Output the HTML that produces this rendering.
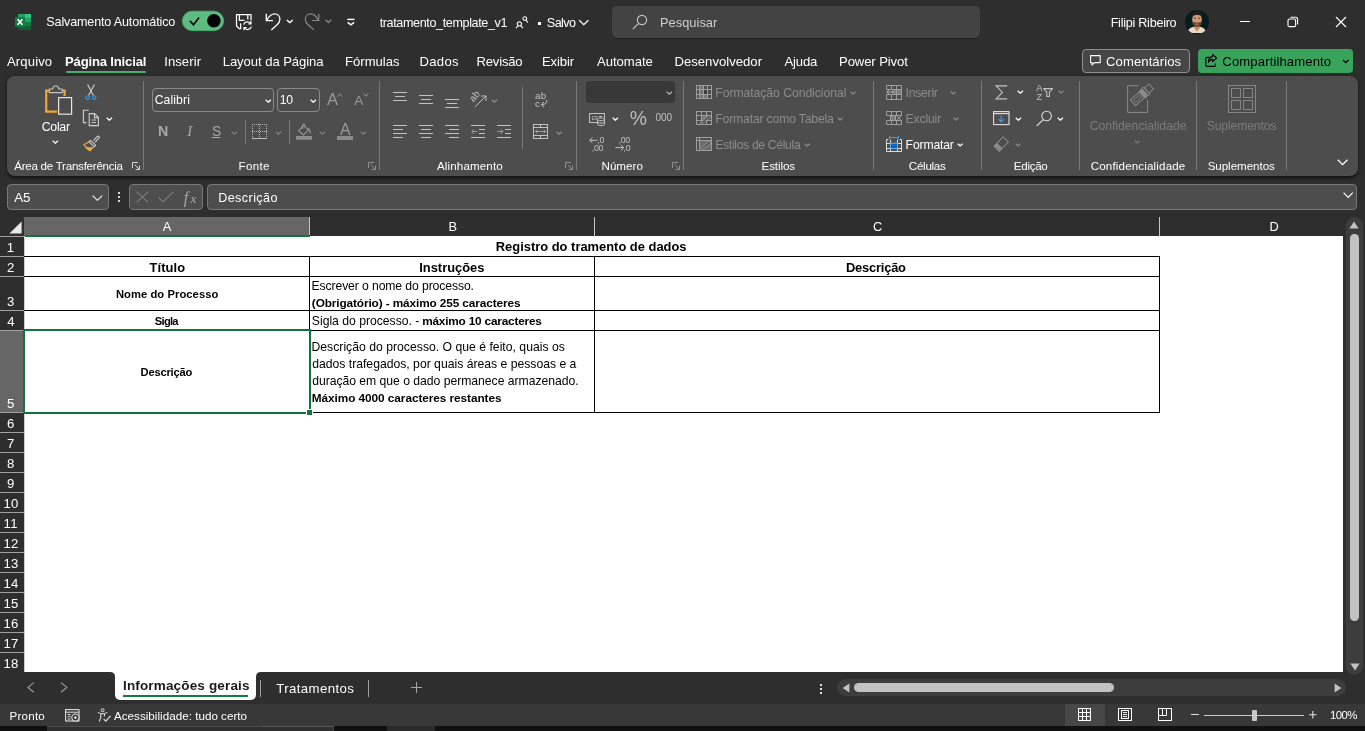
<!DOCTYPE html>
<html lang="pt-BR"><head><meta charset="utf-8"><title>tratamento_template_v1 - Excel</title>
<style>
html,body{margin:0;padding:0;}
body{width:1365px;height:731px;overflow:hidden;position:relative;background:#2e2e2e;font-family:"Liberation Sans", sans-serif;}
#sh>div,#sh>svg{position:absolute;display:block;box-sizing:border-box;}
#sh{position:absolute;left:0;top:0;width:1365px;height:731px;will-change:transform;}
#tx{position:absolute;left:0;top:0;width:1365px;height:731px;will-change:transform;}
span.t{position:absolute;display:block;white-space:pre;line-height:1;}
</style></head><body>
<div id="sh">
<svg style="left:15px;top:13px;" width="17" height="18" viewBox="0 0 17 18" fill="none">
<rect x="3" y="1" width="6.5" height="4" fill="#21a366"/><rect x="9.5" y="1" width="6.5" height="4" fill="#33c481"/>
<rect x="3" y="5" width="6.5" height="4" fill="#107c41"/><rect x="9.5" y="5" width="6.5" height="4" fill="#21a366"/>
<rect x="3" y="9" width="6.5" height="4" fill="#185c37"/><rect x="9.5" y="9" width="6.5" height="4" fill="#107c41"/>
<rect x="3" y="13" width="13" height="4" fill="#185c37"/>
<rect x="0" y="4" width="10" height="10" rx="0.8" fill="#107c41"/>
<path d="M2.6 6.2 L7.4 11.8 M7.4 6.2 L2.6 11.8" stroke="#fff" stroke-width="1.7"/></svg>
<svg style="left:181px;top:10px;" width="44" height="22" viewBox="0 0 44 22" fill="none"><rect x="1.4" y="1.2" width="41.2" height="19.4" rx="9.7" fill="#5ebb82" stroke="#48a96b" stroke-width="1"/>
<circle cx="32.9" cy="10.8" r="6.8" fill="#000"/>
<path d="M8.9 10.9 L12.5 14.7 L18.1 7.5" stroke="#0a0a0a" stroke-width="1.6"/></svg>
<svg style="left:235px;top:13px;" width="18" height="18" viewBox="0 0 18 18" fill="none"><path d="M16 7.6 V1.5 H1.5 V13 L4.2 15.6 H6.4" stroke="#ffffff" stroke-width="1.25" stroke-linejoin="round"/>
<path d="M4.4 1.5 V7.4 H9.6 M12.8 1.5 V6.4" stroke="#ffffff" stroke-width="1.25"/><path d="M5.6 10.4 V15" stroke="#ffffff" stroke-width="1.25"/>
<path d="M8.6 11.6 A4 4 0 0 1 15.6 10.4 M16 8.2 V10.8 H13.4" stroke="#ffffff" stroke-width="1.2"/><path d="M16.4 13.6 A4 4 0 0 1 9.4 15 M9 17.2 V14.6 H11.6" stroke="#ffffff" stroke-width="1.2"/></svg>
<svg style="left:265px;top:13px;" width="17" height="18" viewBox="0 0 17 18" fill="none"><path d="M1.3 0.8 V7.7 H7.9" stroke="#ffffff" stroke-width="1.3"/><path d="M1.8 7.2 C4 3 7 0.9 9.6 0.9 C13 0.9 14.9 3.6 14.9 6.4 C14.9 9 13.4 10.6 11.6 12.2 L6.3 16.9" stroke="#ffffff" stroke-width="1.3"/></svg>
<svg style="left:285.6px;top:19.4px;" width="8" height="5" viewBox="0 0 8 5" fill="none"><path d="M0.8 1 L3.8 3.6 L6.8 1" stroke="#ffffff" stroke-width="1.4"/></svg>
<svg style="left:304px;top:13px;" width="17" height="18" viewBox="0 0 17 18" fill="none"><path d="M14.7 0.8 V7.5 H8.1" stroke="#8a8a8a" stroke-width="1.2"/><path d="M14.2 7 C12 3 9 0.9 6.6 0.9 C3.2 0.9 1.3 3.6 1.3 6.4 C1.3 9 2.8 10.6 4.6 12.2 L9.9 16.9" stroke="#8a8a8a" stroke-width="1.2"/></svg>
<svg style="left:325px;top:19.4px;" width="8" height="5" viewBox="0 0 8 5" fill="none"><path d="M0.6 0.8 L3.4 3.6 L6.2 0.8" stroke="#8a8a8a" stroke-width="1.3"/></svg>
<svg style="left:346.6px;top:18px;" width="8" height="8" viewBox="0 0 8 8" fill="none"><path d="M0.3 1.4 H7.5" stroke="#ffffff" stroke-width="1.4"/><path d="M0.7 4.4 L3.9 6.8 L7.1 4.4" stroke="#ffffff" stroke-width="1.5"/></svg>
<svg style="left:515px;top:15px;" width="14" height="14" viewBox="0 0 14 14" fill="none"><circle cx="9.8" cy="3.6" r="1.9" stroke="#ffffff" stroke-width="1.05"/><path d="M11.2 5.2 L12.9 7.6" stroke="#ffffff" stroke-width="1.05"/>
<circle cx="4.4" cy="8.8" r="2.1" stroke="#ffffff" stroke-width="1.05"/><path d="M0.9 13.2 L3.1 10.6 M5.7 10.6 L7.9 13.2" stroke="#ffffff" stroke-width="1.05"/></svg>
<div style="left:538px;top:22px;width:3px;height:3px;background:#ffffff;"></div>
<svg style="left:578.4px;top:18.8px;" width="12" height="8" viewBox="0 0 12 8" fill="none"><path d="M1.2 1.2 L5.8 5.6 L10.4 1.2" stroke="#ffffff" stroke-width="1.3"/></svg>
<div style="left:612px;top:6px;width:368px;height:32px;background:#434343;border-radius:5px;box-shadow:0 1px 0 #1f1f1f;"></div>
<svg style="left:632.2px;top:13.8px;" width="16" height="16" viewBox="0 0 16 16" fill="none"><circle cx="10" cy="6" r="4.6" stroke="#c4c4c4" stroke-width="1.2"/><path d="M6.6 9.4 L0.8 15.2" stroke="#c4c4c4" stroke-width="1.2"/></svg>
<svg style="left:1185px;top:10px;" width="24" height="24" viewBox="0 0 24 24" fill="none"><defs><clipPath id="av"><circle cx="12" cy="12" r="12"/></clipPath></defs>
<g clip-path="url(#av)"><rect width="24" height="24" fill="#031d1f"/><g transform="translate(0 -1)">
<path d="M2.4 24 C3 19.4 6.6 18.4 9 17.8 L12 20 L15 17.8 C17.4 18.4 20.6 19.4 21.4 24 Z" fill="#e8d8c4"/>
<path d="M9.2 15 H14.8 V19 L12 22.4 L9.2 19 Z" fill="#c48a64"/>
<ellipse cx="12" cy="10.6" rx="4.9" ry="6.2" fill="#d09a78"/>
<path d="M6.6 10.2 C5.6 3.4 9.8 2.4 12 2.4 C14.2 2.4 18.4 3.4 17.4 10.2 C17 7 15.4 6 12 6 C8.6 6 7 7 6.6 10.2 Z" fill="#2c1c15"/>
<path d="M7.2 11.6 C7.4 17.4 10 18 12 18 C14 18 16.6 17.4 16.8 11.6 C15.8 14 14.2 13.4 12 13.4 C9.8 13.4 8.2 14 7.2 11.6 Z" fill="#6a3e2c"/>
<path d="M10.4 15 Q12 15.8 13.6 15" stroke="#d8a78a" stroke-width="0.7" fill="none"/>
<path d="M8.8 9.2 H10.8 M13.2 9.2 H15.2" stroke="#3a241a" stroke-width="0.9"/>
</g></g></svg>
<div style="left:1240px;top:21px;width:10.4px;height:1.2px;background:#ffffff;"></div>
<svg style="left:1287.4px;top:16px;" width="12" height="12" viewBox="0 0 12 12" fill="none"><rect x="1" y="3" width="7.6" height="7.6" rx="1.4" stroke="#ffffff" stroke-width="1.1"/><path d="M3.4 1.2 H8.4 Q10.6 1.2 10.6 3.4 V8.4" stroke="#ffffff" stroke-width="1.1"/></svg>
<svg style="left:1335.2px;top:16px;" width="12" height="12" viewBox="0 0 12 12" fill="none"><path d="M1 1 L11 11 M11 1 L1 11" stroke="#ffffff" stroke-width="1.15"/></svg>
<div style="left:66px;top:71px;width:80px;height:2.4px;background:#4caf6c;border-radius:1px;"></div>
<div style="left:1082px;top:49px;width:108px;height:24px;background:#464646;border:1px solid #919191;border-radius:4px;"></div>
<svg style="left:1089.4px;top:54px;" width="13" height="13" viewBox="0 0 13 13" fill="none"><path d="M1.6 1.6 H11.2 V8.6 H5.4 L3 11 V8.6 H1.6 Z" stroke="#ffffff" stroke-width="1.1" stroke-linejoin="round"/></svg>
<div style="left:1198px;top:49px;width:155px;height:24px;background:#3aa35b;border-radius:4px;"></div>
<svg style="left:1204.4px;top:53px;" width="14" height="15" viewBox="0 0 14 15" fill="none"><path d="M5.4 4.4 H3 Q1.8 4.4 1.8 5.6 V12.2 Q1.8 13.4 3 13.4 H10.2 Q11.4 13.4 11.4 12.2 V10.4" stroke="#000" stroke-width="1.1"/><path d="M8.6 1.4 L12.6 5 L8.6 8.6 V6.4 C6.4 6.4 5.2 7.4 4.4 9.4 C4.4 6 6 3.8 8.6 3.6 Z" stroke="#000" stroke-width="1.1" stroke-linejoin="round"/></svg>
<svg style="left:1341.6px;top:59.4px;" width="8" height="5" viewBox="0 0 8 5" fill="none"><path d="M1 1 L3.8 3.6 L6.6 1" stroke="#000" stroke-width="1.2"/></svg>
<div style="left:7px;top:76px;width:1351px;height:100px;background:#4d4d4d;border-radius:8px;box-shadow:0 1.5px 3.5px rgba(0,0,0,.62);"></div>
<svg style="left:44px;top:83px;" width="30" height="33" viewBox="0 0 30 33" fill="none"><path d="M6 7.6 H2.2 V28.6 H13" stroke="#f2a532" stroke-width="2.2"/><path d="M17 7.6 H20.6 V13" stroke="#f2a532" stroke-width="2.2"/>
<path d="M5.4 9.6 V6 H8.8 A3 3 0 0 1 14.8 6 H18.2 V9.6 Z" stroke="#c4c4c4" stroke-width="1.1" fill="#4d4d4d"/>
<rect x="14.6" y="14.6" width="13" height="16.6" fill="#4d4d4d" stroke="#e6e6e6" stroke-width="1.2"/></svg>
<svg style="left:52.2px;top:140.4px;" width="6.7" height="4.5" viewBox="0 0 6.7 4.5" fill="none"><path d="M0.7 0.8 L3.35 3.2 L6.0 0.8" stroke="#ffffff" stroke-width="1.3"/></svg>
<svg style="left:85px;top:84px;" width="12" height="17" viewBox="0 0 12 17" fill="none"><path d="M2.6 0.6 L8.4 11.6 M9.4 0.6 L3.6 11.6" stroke="#d0d0d0" stroke-width="1.1"/>
<circle cx="2.8" cy="13.6" r="1.8" stroke="#3b9ee8" stroke-width="1.1"/><circle cx="9.2" cy="13.6" r="1.8" stroke="#3b9ee8" stroke-width="1.1"/></svg>
<svg style="left:82px;top:109px;" width="18" height="18" viewBox="0 0 18 18" fill="none"><path d="M4.4 13.6 H1.4 V1.2 H6.8" stroke="#d0d0d0" stroke-width="1.1"/>
<path d="M7.2 4.6 H12.6 L16.4 8.4 V16.6 H7.2 Z" stroke="#d0d0d0" stroke-width="1.1"/><path d="M12.4 4.8 V8.6 H16.2" stroke="#d0d0d0" stroke-width="1.1"/>
<path d="M9.6 11 H14 M9.6 13.6 H14" stroke="#d0d0d0" stroke-width="1"/></svg>
<svg style="left:106px;top:116.6px;" width="6.7" height="4.5" viewBox="0 0 6.7 4.5" fill="none"><path d="M0.7 0.8 L3.35 3.2 L6.0 0.8" stroke="#ffffff" stroke-width="1.3"/></svg>
<svg style="left:83px;top:135px;" width="17" height="17" viewBox="0 0 17 17" fill="none"><path d="M10.4 5.6 L14.4 1.4 Q15.6 0.6 16.2 1.8 Q16.4 2.8 15.6 3.4 L12 7.4" stroke="#d0d0d0" stroke-width="1.1"/>
<path d="M7.4 5.4 L12.6 10.2 L11.2 11.8 L6 6.8 Z" stroke="#d0d0d0" stroke-width="1.1"/>
<path d="M5.8 7 L0.8 9.6 C2.4 12.4 4.6 14.6 7 15.8 L10.8 11.6" stroke="#f2b84c" stroke-width="1.1"/><path d="M3 11.6 C5 12.6 7.4 12.6 9.4 12 L7 15 C5.4 14.2 4 13 3 11.6Z" fill="#f2b84c"/></svg>
<svg style="left:132px;top:162px;" width="9" height="9" viewBox="0 0 9 9" fill="none"><path d="M0.5 6 V0.5 H6" stroke="#d6d6d6" stroke-width="1"/><path d="M2.7 2.7 L7.4 7.4 M7.5 3.6 V7.5 H3.6" stroke="#d6d6d6" stroke-width="1"/></svg>
<div style="left:143px;top:81px;width:1px;height:89px;background:#7a7a7a;"></div>
<div style="left:152px;top:88px;width:122.4px;height:23.5px;background:transparent;border:1px solid #8a8a8a;border-radius:4px;"></div>
<svg style="left:264.6px;top:98.6px;" width="6.7" height="4.5" viewBox="0 0 6.7 4.5" fill="none"><path d="M0.7 0.8 L3.35 3.2 L6.0 0.8" stroke="#ffffff" stroke-width="1.3"/></svg>
<div style="left:277px;top:88px;width:42.8px;height:23.5px;background:transparent;border:1px solid #8a8a8a;border-radius:4px;"></div>
<svg style="left:310px;top:98.6px;" width="6.7" height="4.5" viewBox="0 0 6.7 4.5" fill="none"><path d="M0.7 0.8 L3.35 3.2 L6.0 0.8" stroke="#ffffff" stroke-width="1.3"/></svg>
<svg style="left:337px;top:93px;" width="6" height="4" viewBox="0 0 6 4" fill="none"><path d="M0.5 3.5 L2.7 0.8 L4.9 3.5" stroke="#9a9a9a" stroke-width="1"/></svg>
<svg style="left:362.6px;top:92.6px;" width="6" height="4" viewBox="0 0 6 4" fill="none"><path d="M0.5 0.5 L2.8 3.2 L5.1 0.5" stroke="#9a9a9a" stroke-width="1"/></svg>
<div style="left:212px;top:137px;width:8px;height:1px;background:#a8a8a8;"></div>
<svg style="left:231px;top:130.6px;" width="6.7" height="4.5" viewBox="0 0 6.7 4.5" fill="none"><path d="M0.7 0.8 L3.35 3.2 L6.0 0.8" stroke="#7d7d7d" stroke-width="1.3"/></svg>
<div style="left:245px;top:120px;width:1px;height:24px;background:#7a7a7a;"></div>
<svg style="left:252px;top:124px;" width="16" height="16" viewBox="0 0 16 16" fill="none"><path d="M0 0.5 H15 M0 7.5 H15" stroke="#b4b4b4" stroke-width="1" stroke-dasharray="1 1"/><path d="M0.5 0 V13 M7.5 0 V13 M14.5 0 V13" stroke="#b4b4b4" stroke-width="1" stroke-dasharray="1 1"/><path d="M0 14.5 H15" stroke="#c0c0c0" stroke-width="1"/></svg>
<svg style="left:275px;top:130.6px;" width="6.7" height="4.5" viewBox="0 0 6.7 4.5" fill="none"><path d="M0.7 0.8 L3.35 3.2 L6.0 0.8" stroke="#7d7d7d" stroke-width="1.3"/></svg>
<div style="left:289px;top:120px;width:1px;height:24px;background:#7a7a7a;"></div>
<svg style="left:296px;top:123px;" width="17" height="17" viewBox="0 0 17 17" fill="none"><path d="M7.4 2.6 L2.6 7.6 L7.4 12 L12.4 6.8 Z" stroke="#9a9a9a" stroke-width="1.05" stroke-linejoin="round"/><path d="M6.4 6 V2.2 Q6.4 0.8 7.6 0.8 Q8.8 0.8 8.8 2.2 V4" stroke="#9a9a9a" stroke-width="1"/>
<path d="M12 5.2 Q14.4 6.6 14.2 10.6" stroke="#9a9a9a" stroke-width="1.1"/><rect x="0" y="13" width="16" height="3.7" fill="#8c8c8c"/></svg>
<svg style="left:319px;top:130.8px;" width="6.7" height="4.5" viewBox="0 0 6.7 4.5" fill="none"><path d="M0.7 0.8 L3.35 3.2 L6.0 0.8" stroke="#7d7d7d" stroke-width="1.3"/></svg>
<div style="left:337px;top:136px;width:16px;height:3.6px;background:#8c8c8c;"></div>
<svg style="left:360px;top:130.8px;" width="6.7" height="4.5" viewBox="0 0 6.7 4.5" fill="none"><path d="M0.7 0.8 L3.35 3.2 L6.0 0.8" stroke="#7d7d7d" stroke-width="1.3"/></svg>
<svg style="left:368px;top:162px;" width="9" height="9" viewBox="0 0 9 9" fill="none"><path d="M0.5 6 V0.5 H6" stroke="#8e8e8e" stroke-width="1"/><path d="M2.7 2.7 L7.4 7.4 M7.5 3.6 V7.5 H3.6" stroke="#8e8e8e" stroke-width="1"/></svg>
<div style="left:379px;top:81px;width:1px;height:89px;background:#7a7a7a;"></div>
<div style="left:393px;top:92px;width:14px;height:1px;background:#c2c2c2;"></div>
<div style="left:395px;top:96px;width:10px;height:1px;background:#c2c2c2;"></div>
<div style="left:393px;top:100px;width:14px;height:1px;background:#c2c2c2;"></div>
<div style="left:419px;top:95px;width:14px;height:1px;background:#c2c2c2;"></div>
<div style="left:421px;top:99px;width:10px;height:1px;background:#c2c2c2;"></div>
<div style="left:419px;top:103px;width:14px;height:1px;background:#c2c2c2;"></div>
<div style="left:445px;top:99px;width:14px;height:1px;background:#c2c2c2;"></div>
<div style="left:447px;top:103px;width:10px;height:1px;background:#c2c2c2;"></div>
<div style="left:445px;top:107px;width:14px;height:1px;background:#c2c2c2;"></div>
<svg style="left:469px;top:91px;" width="19" height="17" viewBox="0 0 19 17" fill="none"><text x="0" y="0" transform="translate(4.6 11.4) rotate(-50)" font-family="Liberation Sans, sans-serif" font-size="9.8" fill="#c2c2c2">ab</text>
<path d="M6 15.8 L16.6 5.4 M12 5 H17 V10" stroke="#c2c2c2" stroke-width="1"/></svg>
<svg style="left:491.2px;top:98.6px;" width="6.7" height="4.5" viewBox="0 0 6.7 4.5" fill="none"><path d="M0.7 0.8 L3.35 3.2 L6.0 0.8" stroke="#8a8a8a" stroke-width="1.3"/></svg>
<div style="left:393px;top:125px;width:14px;height:1px;background:#c2c2c2;"></div>
<div style="left:419px;top:125px;width:14px;height:1px;background:#c2c2c2;"></div>
<div style="left:445px;top:125px;width:14px;height:1px;background:#c2c2c2;"></div>
<div style="left:471px;top:125px;width:14px;height:1px;background:#c2c2c2;"></div>
<div style="left:497px;top:125px;width:14px;height:1px;background:#c2c2c2;"></div>
<div style="left:393px;top:129px;width:10px;height:1px;background:#c2c2c2;"></div>
<div style="left:421px;top:129px;width:10px;height:1px;background:#c2c2c2;"></div>
<div style="left:449px;top:129px;width:10px;height:1px;background:#c2c2c2;"></div>
<div style="left:479px;top:129px;width:6px;height:1px;background:#c2c2c2;"></div>
<div style="left:505px;top:129px;width:6px;height:1px;background:#c2c2c2;"></div>
<div style="left:393px;top:133px;width:14px;height:1px;background:#c2c2c2;"></div>
<div style="left:419px;top:133px;width:14px;height:1px;background:#c2c2c2;"></div>
<div style="left:445px;top:133px;width:14px;height:1px;background:#c2c2c2;"></div>
<div style="left:479px;top:133px;width:6px;height:1px;background:#c2c2c2;"></div>
<div style="left:505px;top:133px;width:6px;height:1px;background:#c2c2c2;"></div>
<div style="left:393px;top:137px;width:10px;height:1px;background:#c2c2c2;"></div>
<div style="left:421px;top:137px;width:10px;height:1px;background:#c2c2c2;"></div>
<div style="left:449px;top:137px;width:10px;height:1px;background:#c2c2c2;"></div>
<div style="left:471px;top:137px;width:14px;height:1px;background:#c2c2c2;"></div>
<div style="left:497px;top:137px;width:14px;height:1px;background:#c2c2c2;"></div>
<svg style="left:471px;top:128px;" width="7" height="7" viewBox="0 0 7 7" fill="none"><path d="M6.4 3.5 H0.8 M3.2 1 L0.7 3.5 L3.2 6" stroke="#9c9c9c" stroke-width="1"/></svg>
<svg style="left:497px;top:128px;" width="7" height="7" viewBox="0 0 7 7" fill="none"><path d="M0.2 3.5 H5.8 M3.4 1 L5.9 3.5 L3.4 6" stroke="#9c9c9c" stroke-width="1"/></svg>
<div style="left:522px;top:87px;width:1px;height:62px;background:#7a7a7a;"></div>
<svg style="left:534px;top:90px;" width="16" height="19" viewBox="0 0 16 19" fill="none"><text x="0.9" y="9.4" font-family="Liberation Sans, sans-serif" font-size="9.8" fill="#c2c2c2" letter-spacing="0.3">ab</text><text x="0.9" y="16.9" font-family="Liberation Sans, sans-serif" font-size="9.8" fill="#c2c2c2">c</text>
<path d="M12.6 10 C13.6 12.6 11.6 14.6 7.4 14.6 M10 12 L7.2 14.6 L10 17.2" stroke="#c2c2c2" stroke-width="1"/></svg>
<svg style="left:533px;top:124px;" width="15" height="15" viewBox="0 0 15 15" fill="none"><rect x="0.5" y="0.5" width="14" height="14" stroke="#c2c2c2" stroke-width="1"/><path d="M0.5 3.5 H14.5 M0.5 11.5 H14.5 M7.5 0.5 V3.5 M7.5 11.5 V14.5" stroke="#c2c2c2" stroke-width="1"/>
<path d="M2.4 7.5 H12.6 M4.4 5.5 L2.4 7.5 L4.4 9.5 M10.6 5.5 L12.6 7.5 L10.6 9.5" stroke="#a0a0a0" stroke-width="1"/></svg>
<svg style="left:556.2px;top:130.6px;" width="6.7" height="4.5" viewBox="0 0 6.7 4.5" fill="none"><path d="M0.7 0.8 L3.35 3.2 L6.0 0.8" stroke="#8a8a8a" stroke-width="1.3"/></svg>
<svg style="left:565px;top:162px;" width="9" height="9" viewBox="0 0 9 9" fill="none"><path d="M0.5 6 V0.5 H6" stroke="#8e8e8e" stroke-width="1"/><path d="M2.7 2.7 L7.4 7.4 M7.5 3.6 V7.5 H3.6" stroke="#8e8e8e" stroke-width="1"/></svg>
<div style="left:576px;top:81px;width:1px;height:89px;background:#7a7a7a;"></div>
<div style="left:586px;top:81px;width:89px;height:22.4px;background:#383838;border-radius:4px;"></div>
<svg style="left:666.4px;top:90.8px;" width="6.7" height="4.5" viewBox="0 0 6.7 4.5" fill="none"><path d="M0.7 0.8 L3.35 3.2 L6.0 0.8" stroke="#b0b0b0" stroke-width="1.3"/></svg>
<svg style="left:589px;top:113px;" width="17" height="14" viewBox="0 0 17 14" fill="none"><rect x="0.5" y="0.5" width="15" height="9" stroke="#c2c2c2" stroke-width="1"/><text x="2.4" y="7.4" font-family="Liberation Sans, sans-serif" font-size="7.6" fill="#c2c2c2">cr</text><path d="M10 3.5 H13" stroke="#c2c2c2" stroke-width="1"/>
<path d="M8.5 6.4 C8.5 4.4 15.5 4.4 15.5 6.4 V11 C15.5 13.2 8.5 13.2 8.5 11 Z" fill="#4d4d4d" stroke="#c2c2c2" stroke-width="1"/><path d="M8.5 6.4 C8.5 8.2 15.5 8.2 15.5 6.4 M8.5 8.8 C8.5 10.6 15.5 10.6 15.5 8.8" stroke="#c2c2c2" stroke-width="1"/></svg>
<svg style="left:612.1px;top:116.6px;" width="6.7" height="4.5" viewBox="0 0 6.7 4.5" fill="none"><path d="M0.7 0.8 L3.35 3.2 L6.0 0.8" stroke="#ffffff" stroke-width="1.3"/></svg>
<svg style="left:589px;top:135px;" width="17" height="17" viewBox="0 0 17 17" fill="none"><path d="M0.8 5.3 H8.4 M3.6 2.5 L0.8 5.3 L3.6 8.1" stroke="#c2c2c2" stroke-width="1"/><text x="8.2" y="7.5" font-family="Liberation Sans, sans-serif" font-size="8.8" fill="#c2c2c2" letter-spacing="-0.2">,0</text><text x="2.8" y="15.9" font-family="Liberation Sans, sans-serif" font-size="8.8" fill="#c2c2c2" letter-spacing="-0.3">,00</text></svg>
<svg style="left:614.6px;top:135px;" width="17" height="17" viewBox="0 0 17 17" fill="none"><text x="3.6" y="7.5" font-family="Liberation Sans, sans-serif" font-size="8.8" fill="#c2c2c2" letter-spacing="-0.3">,00</text><path d="M0.4 12.6 H8.6 M5.8 9.8 L8.6 12.6 L5.8 15.4" stroke="#c2c2c2" stroke-width="1"/><text x="8.4" y="15.9" font-family="Liberation Sans, sans-serif" font-size="8.8" fill="#c2c2c2" letter-spacing="-0.2">,0</text></svg>
<svg style="left:672px;top:162px;" width="9" height="9" viewBox="0 0 9 9" fill="none"><path d="M0.5 6 V0.5 H6" stroke="#8e8e8e" stroke-width="1"/><path d="M2.7 2.7 L7.4 7.4 M7.5 3.6 V7.5 H3.6" stroke="#8e8e8e" stroke-width="1"/></svg>
<div style="left:683px;top:81px;width:1px;height:89px;background:#7a7a7a;"></div>
<svg style="left:696px;top:85px;" width="16" height="15" viewBox="0 0 16 15" fill="none"><rect x="4" y="1" width="4" height="8.5" fill="#777"/><rect x="8" y="5" width="4" height="4.5" fill="#3c3c3c"/><rect x="4" y="10" width="8" height="3.5" fill="#777"/><rect x="0.5" y="0.5" width="15" height="13" stroke="#9e9e9e" stroke-width="1"/><path d="M0.5 4.5 H15.5 M0.5 9.5 H15.5 M3.5 0.5 V13.5 M7.5 0.5 V13.5 M11.5 0.5 V13.5" stroke="#9e9e9e" stroke-width="1"/></svg>
<svg style="left:849.8px;top:91px;" width="6.3" height="4.3" viewBox="0 0 6.3 4.3" fill="none"><path d="M0.7 0.8 L3.15 3.0 L5.6 0.8" stroke="#8a8a8a" stroke-width="1.3"/></svg>
<svg style="left:696px;top:111px;" width="16" height="15" viewBox="0 0 16 15" fill="none"><rect x="6" y="5" width="4.5" height="4.5" fill="#777"/><rect x="0.5" y="0.5" width="15" height="13" stroke="#9e9e9e" stroke-width="1"/><path d="M0.5 4.5 H15.5 M0.5 9.5 H15.5 M5.5 0.5 V13.5 M10.5 0.5 V13.5" stroke="#9e9e9e" stroke-width="1"/><path d="M4.4 13.6 L2.8 14 L3.5 12.4 L12.6 4.8 Q14 4 14.7 5 Q15.2 6 14.2 6.8 Z" fill="#4d4d4d" stroke="#9e9e9e" stroke-width="0.9"/></svg>
<svg style="left:837.4px;top:117px;" width="6.3" height="4.3" viewBox="0 0 6.3 4.3" fill="none"><path d="M0.7 0.8 L3.15 3.0 L5.6 0.8" stroke="#8a8a8a" stroke-width="1.3"/></svg>
<svg style="left:696px;top:137px;" width="16" height="15" viewBox="0 0 16 15" fill="none"><rect x="4" y="4" width="11" height="9" fill="#6e6e6e"/><rect x="0.5" y="0.5" width="15" height="13" stroke="#9e9e9e" stroke-width="1"/><path d="M0.5 3.5 H15.5 M3.5 0.5 V13.5" stroke="#9e9e9e" stroke-width="1"/><path d="M4.4 13.6 L2.8 14 L3.5 12.4 L12.6 4.8 Q14 4 14.7 5 Q15.2 6 14.2 6.8 Z" fill="#4d4d4d" stroke="#9e9e9e" stroke-width="0.9"/></svg>
<svg style="left:804.4px;top:142.8px;" width="6.3" height="4.3" viewBox="0 0 6.3 4.3" fill="none"><path d="M0.7 0.8 L3.15 3.0 L5.6 0.8" stroke="#8a8a8a" stroke-width="1.3"/></svg>
<div style="left:873px;top:81px;width:1px;height:89px;background:#7a7a7a;"></div>
<svg style="left:886px;top:85px;" width="16" height="15" viewBox="0 0 16 15" fill="none"><rect x="6" y="5" width="9.5" height="4.5" fill="#7c7c7c"/><path d="M5.5 4.5 H0.5 V0.5 H15.5 V14.5 H0.5 V9.5 H5.5 M5.5 4.5 H15.5 M5.5 9.5 H15.5 M5.5 0.5 V4.5 M5.5 9.5 V14.5 M10.5 0.5 V14.5" stroke="#9e9e9e" stroke-width="1"/><path d="M0.8 7 H8 M3.6 4.2 L0.8 7 L3.6 9.8" stroke="#b4b4b4" stroke-width="1"/></svg>
<svg style="left:950.4px;top:91px;" width="6.3" height="4.3" viewBox="0 0 6.3 4.3" fill="none"><path d="M0.7 0.8 L3.15 3.0 L5.6 0.8" stroke="#8a8a8a" stroke-width="1.3"/></svg>
<svg style="left:886px;top:111px;" width="16" height="15" viewBox="0 0 16 15" fill="none"><rect x="5" y="5" width="4" height="4.5" fill="#7c7c7c"/><path d="M0.5 0.5 H15.5 V4.5 H0.5 Z M5.5 0.5 V4.5 M10.5 0.5 V4.5 M0.5 9.5 H15.5 V13.5 H0.5 Z M5.5 9.5 V13.5 M10.5 9.5 V13.5 M4.5 4.5 V9.5 M9.5 4.5 V9.5" stroke="#9e9e9e" stroke-width="1"/><path d="M10.8 4.9 L15 9.1 M15 4.9 L10.8 9.1" stroke="#9e9e9e" stroke-width="1"/></svg>
<svg style="left:953.4px;top:117px;" width="6.3" height="4.3" viewBox="0 0 6.3 4.3" fill="none"><path d="M0.7 0.8 L3.15 3.0 L5.6 0.8" stroke="#8a8a8a" stroke-width="1.3"/></svg>
<svg style="left:886px;top:136px;" width="16" height="17" viewBox="0 0 16 17" fill="none"><path d="M3.5 1.5 H12.5 M3.5 0 V3 M12.5 0 V3" stroke="#3b9ee8" stroke-width="1"/><path d="M2.4 3.5 H0.5 V15.5 H15.5 V3.5 H13.6" stroke="#dcdcdc" stroke-width="1"/><path d="M0.5 7.5 H15.5 M0.5 12.5 H15.5 M4.5 3.5 V15.5 M11.5 3.5 V15.5" stroke="#dcdcdc" stroke-width="1"/><rect x="4.5" y="7.2" width="7" height="5.3" fill="#0f62c0" stroke="#62aeea" stroke-width="1"/></svg>
<svg style="left:957.4px;top:142.8px;" width="6.3" height="4.3" viewBox="0 0 6.3 4.3" fill="none"><path d="M0.7 0.8 L3.15 3.0 L5.6 0.8" stroke="#ffffff" stroke-width="1.3"/></svg>
<div style="left:981px;top:81px;width:1px;height:89px;background:#7a7a7a;"></div>
<svg style="left:995.4px;top:84.6px;" width="13" height="15" viewBox="0 0 13 15" fill="none"><path d="M12.2 0.9 H1.2 L7.4 7.4 L1.2 13.9 H12.2" stroke="#c2c2c2" stroke-width="1.1" stroke-linejoin="miter"/></svg>
<svg style="left:1017px;top:90.4px;" width="6.7" height="4.5" viewBox="0 0 6.7 4.5" fill="none"><path d="M0.7 0.8 L3.35 3.2 L6.0 0.8" stroke="#ffffff" stroke-width="1.3"/></svg>
<svg style="left:1035.6px;top:84px;" width="18" height="17" viewBox="0 0 18 17" fill="none"><text x="0.3" y="7.2" font-family="Liberation Sans, sans-serif" font-size="9.2" fill="#c2c2c2">A</text><text x="0.5" y="15.9" font-family="Liberation Sans, sans-serif" font-size="9.2" fill="#c2c2c2">Z</text>
<path d="M7.6 4.6 H16.6 L13.4 8.2 V12.4 H10.8 V8.2 Z" stroke="#c2c2c2" stroke-width="1.05" stroke-linejoin="round"/></svg>
<svg style="left:1057.6px;top:90.4px;" width="6.3" height="4.3" viewBox="0 0 6.3 4.3" fill="none"><path d="M0.7 0.8 L3.15 3.0 L5.6 0.8" stroke="#8a8a8a" stroke-width="1.3"/></svg>
<svg style="left:993px;top:111px;" width="17" height="15" viewBox="0 0 17 15" fill="none"><rect x="0.6" y="0.6" width="15.4" height="13" stroke="#e0e0e0" stroke-width="1.1"/><path d="M0.6 2.6 H16" stroke="#e0e0e0" stroke-width="1.1"/><path d="M8.2 4.6 V10.8 M5.4 8.2 L8.2 11 L11 8.2" stroke="#3b9ee8" stroke-width="1.2"/></svg>
<svg style="left:1015.2px;top:116.6px;" width="6.7" height="4.5" viewBox="0 0 6.7 4.5" fill="none"><path d="M0.7 0.8 L3.35 3.2 L6.0 0.8" stroke="#ffffff" stroke-width="1.3"/></svg>
<svg style="left:1036px;top:109.6px;" width="17" height="17" viewBox="0 0 17 17" fill="none"><circle cx="10.6" cy="6" r="4.8" stroke="#dadada" stroke-width="1.1"/><path d="M7.2 9.6 L0.8 16" stroke="#dadada" stroke-width="1.2"/></svg>
<svg style="left:1057.2px;top:116.6px;" width="6.7" height="4.5" viewBox="0 0 6.7 4.5" fill="none"><path d="M0.7 0.8 L3.35 3.2 L6.0 0.8" stroke="#ffffff" stroke-width="1.3"/></svg>
<svg style="left:993.4px;top:135.6px;" width="17" height="17" viewBox="0 0 17 17" fill="none"><path d="M10.2 0.8 L15.4 6 L6.2 15.4 L1 10.2 Z" stroke="#9e9e9e" stroke-width="1" stroke-linejoin="round"/><path d="M4.2 7 L9.4 12.2 L6.2 15.4 L1 10.2 Z" fill="#8a8a8a"/></svg>
<svg style="left:1015.4px;top:142.8px;" width="6.3" height="4.3" viewBox="0 0 6.3 4.3" fill="none"><path d="M0.7 0.8 L3.15 3.0 L5.6 0.8" stroke="#8a8a8a" stroke-width="1.3"/></svg>
<div style="left:1079px;top:81px;width:1px;height:89px;background:#7a7a7a;"></div>
<svg style="left:1127px;top:82px;" width="30" height="32" viewBox="0 0 30 32" fill="none"><path d="M11.4 3.8 H0.6 V30.4 H20.6 V18" stroke="#8a8a8a" stroke-width="1"/>
<g transform="translate(15.2 12.6) rotate(-42)"><rect x="-12.4" y="-3.8" width="12" height="7.6" stroke="#8a8a8a" stroke-width="1" fill="#4d4d4d"/><rect x="-10.4" y="-1.5" width="8" height="3" stroke="#8a8a8a" stroke-width="0.9"/><rect x="-0.4" y="-5" width="4.4" height="10" fill="#8a8a8a"/><rect x="4" y="-5" width="2.2" height="10" stroke="#8a8a8a" stroke-width="0.9" fill="#4d4d4d"/><rect x="6.2" y="-3.4" width="6" height="6.8" stroke="#8a8a8a" stroke-width="1" fill="#4d4d4d"/></g></svg>
<svg style="left:1134px;top:139.6px;" width="6.3" height="4.3" viewBox="0 0 6.3 4.3" fill="none"><path d="M0.7 0.8 L3.15 3.0 L5.6 0.8" stroke="#7c7c7c" stroke-width="1.3"/></svg>
<div style="left:1196px;top:81px;width:1px;height:89px;background:#7a7a7a;"></div>
<svg style="left:1228px;top:85px;" width="28" height="28" viewBox="0 0 28 28" fill="none"><rect x="0.5" y="0.5" width="27" height="27" stroke="#858585" stroke-width="1"/><rect x="3.5" y="3.5" width="9" height="9" stroke="#858585" stroke-width="1"/><rect x="15.5" y="3.5" width="9" height="9" stroke="#858585" stroke-width="1"/><rect x="3.5" y="15.5" width="9" height="9" stroke="#858585" stroke-width="1"/><rect x="15.5" y="15.5" width="9" height="9" stroke="#858585" stroke-width="1"/></svg>
<div style="left:1286px;top:81px;width:1px;height:89px;background:#7a7a7a;"></div>
<svg style="left:1337px;top:159px;" width="12" height="7" viewBox="0 0 12 7" fill="none"><path d="M0.8 0.8 L5.6 5.6 L10.4 0.8" stroke="#ffffff" stroke-width="1.3"/></svg>
<div style="left:7px;top:184px;width:102px;height:26px;background:#4d4d4d;border:1px solid #787878;border-radius:4px;"></div>
<svg style="left:92.4px;top:195.2px;" width="11" height="7" viewBox="0 0 11 7" fill="none"><path d="M0.6 0.7 L5.4 5.3 L10.2 0.7" stroke="#ffffff" stroke-width="1.05"/></svg>
<div style="left:118.4px;top:192px;width:2px;height:2px;background:#d8d8d8;"></div>
<div style="left:118.4px;top:196px;width:2px;height:2px;background:#d8d8d8;"></div>
<div style="left:118.4px;top:200px;width:2px;height:2px;background:#d8d8d8;"></div>
<div style="left:129px;top:184px;width:73.6px;height:26px;background:#4d4d4d;border:1px solid #787878;border-radius:4px;"></div>
<svg style="left:135.6px;top:191.4px;" width="13" height="12" viewBox="0 0 13 12" fill="none"><path d="M0.6 0.6 L12.2 11.4 M12.2 0.6 L0.6 11.4" stroke="#7e7e7e" stroke-width="1.1"/></svg>
<svg style="left:158px;top:191.4px;" width="16" height="12" viewBox="0 0 16 12" fill="none"><path d="M0.6 6.4 L5 11 L15.4 0.8" stroke="#7e7e7e" stroke-width="1.1"/></svg>
<div style="left:207px;top:184px;width:1150px;height:26px;background:#4d4d4d;border:1px solid #787878;border-radius:4px;"></div>
<svg style="left:1342.8px;top:192px;" width="11" height="7" viewBox="0 0 11 7" fill="none"><path d="M0.6 0.7 L5.2 5.4 L9.8 0.7" stroke="#ffffff" stroke-width="1.15"/></svg>
<div style="left:0px;top:217px;width:1343.4px;height:19px;background:#2e2e2e;"></div>
<div style="left:24px;top:236px;width:1319.4px;height:436px;background:#ffffff;"></div>
<div style="left:0px;top:236px;width:24px;height:436px;background:#2e2e2e;"></div>
<svg style="left:8.6px;top:220.8px;" width="13" height="13" viewBox="0 0 13 13" fill="none"><path d="M12.6 0.4 V12.4 H0.4 Z" fill="#e8e8e8"/></svg>
<div style="left:0px;top:236px;width:24px;height:1px;background:#a2a2a2;"></div>
<div style="left:24px;top:217px;width:286px;height:18px;background:#666666;"></div>
<div style="left:24px;top:235px;width:286px;height:2px;background:#13733f;"></div>
<div style="left:309px;top:217px;width:1px;height:18px;background:#c6c6c6;"></div>
<div style="left:594px;top:217px;width:1px;height:19px;background:#c6c6c6;"></div>
<div style="left:1159px;top:217px;width:1px;height:19px;background:#c6c6c6;"></div>
<div style="left:24px;top:236px;width:0.6px;height:436px;background:#d0d0d0;"></div>
<div style="left:0px;top:256px;width:24px;height:1px;background:#a2a2a2;"></div>
<div style="left:0px;top:276px;width:24px;height:1px;background:#a2a2a2;"></div>
<div style="left:0px;top:310px;width:24px;height:1px;background:#a2a2a2;"></div>
<div style="left:0px;top:330px;width:23px;height:1px;background:#a2a2a2;"></div>
<div style="left:0px;top:331px;width:23px;height:81px;background:#666666;"></div>
<div style="left:0px;top:412px;width:23px;height:1px;background:#a2a2a2;"></div>
<div style="left:0px;top:432px;width:24px;height:1px;background:#a2a2a2;"></div>
<div style="left:0px;top:452px;width:24px;height:1px;background:#a2a2a2;"></div>
<div style="left:0px;top:472px;width:24px;height:1px;background:#a2a2a2;"></div>
<div style="left:0px;top:492px;width:24px;height:1px;background:#a2a2a2;"></div>
<div style="left:0px;top:512px;width:24px;height:1px;background:#a2a2a2;"></div>
<div style="left:0px;top:532px;width:24px;height:1px;background:#a2a2a2;"></div>
<div style="left:0px;top:552px;width:24px;height:1px;background:#a2a2a2;"></div>
<div style="left:0px;top:572px;width:24px;height:1px;background:#a2a2a2;"></div>
<div style="left:0px;top:592px;width:24px;height:1px;background:#a2a2a2;"></div>
<div style="left:0px;top:612px;width:24px;height:1px;background:#a2a2a2;"></div>
<div style="left:0px;top:632px;width:24px;height:1px;background:#a2a2a2;"></div>
<div style="left:0px;top:652px;width:24px;height:1px;background:#a2a2a2;"></div>
<div style="left:24px;top:256px;width:1136px;height:1px;background:#000000;"></div>
<div style="left:24px;top:276px;width:1136px;height:1px;background:#000000;"></div>
<div style="left:24px;top:310px;width:1136px;height:1px;background:#000000;"></div>
<div style="left:24px;top:330px;width:1136px;height:1px;background:#000000;"></div>
<div style="left:24px;top:412px;width:1136px;height:1px;background:#000000;"></div>
<div style="left:309px;top:256px;width:1px;height:157px;background:#000000;"></div>
<div style="left:594px;top:256px;width:1px;height:157px;background:#000000;"></div>
<div style="left:1159px;top:256px;width:1px;height:157px;background:#000000;"></div>
<div style="left:23px;top:329px;width:288px;height:85px;background:transparent;border:2px solid #13733f;"></div>
<div style="left:306px;top:409px;width:7px;height:7px;background:#13733f;border:1px solid #fff;"></div>
<div style="left:1346px;top:217px;width:17px;height:458px;background:#3d3d3d;border-radius:8.5px;"></div>
<svg style="left:1349.4px;top:221px;" width="10" height="8" viewBox="0 0 10 8" fill="none"><path d="M5 0.6 L9.6 7.4 H0.4 Z" fill="#c2c2c2"/></svg>
<div style="left:1350.2px;top:233.8px;width:8.6px;height:387.4px;background:#c2c2c2;border-radius:4.3px;"></div>
<svg style="left:1349.6px;top:662.8px;" width="10" height="8" viewBox="0 0 10 8" fill="none"><path d="M5 7.4 L9.6 0.6 H0.4 Z" fill="#c2c2c2"/></svg>
<div style="left:837px;top:678.8px;width:509.4px;height:17.2px;background:#3d3d3d;border-radius:8.6px;"></div>
<svg style="left:841.6px;top:682.6px;" width="8" height="10" viewBox="0 0 8 10" fill="none"><path d="M0.6 5 L7.4 0.4 V9.6 Z" fill="#c2c2c2"/></svg>
<svg style="left:1334px;top:682.6px;" width="8" height="10" viewBox="0 0 8 10" fill="none"><path d="M7.4 5 L0.6 0.4 V9.6 Z" fill="#c2c2c2"/></svg>
<div style="left:854px;top:683px;width:260.4px;height:9px;background:#c2c2c2;border-radius:4.5px;"></div>
<div style="left:820px;top:684.4px;width:2px;height:2px;background:#e0e0e0;"></div>
<div style="left:820px;top:688.2px;width:2px;height:2px;background:#e0e0e0;"></div>
<div style="left:820px;top:692px;width:2px;height:2px;background:#e0e0e0;"></div>
<div style="left:114.6px;top:672px;width:141.6px;height:28px;background:#ffffff;border-radius:0 0 5px 5px;"></div>
<svg style="left:109.6px;top:672px;" width="5" height="5" viewBox="0 0 5 5" fill="none"><path d="M5 0 V5 Q5 0 0 0 Z" fill="#fff"/></svg>
<svg style="left:256.2px;top:672px;" width="5" height="5" viewBox="0 0 5 5" fill="none"><path d="M0 0 V5 Q0 0 5 0 Z" fill="#fff"/></svg>
<div style="left:123.4px;top:695px;width:125px;height:2px;background:#107c41;"></div>
<div style="left:260px;top:679.6px;width:1px;height:17px;background:#a0a0a0;"></div>
<div style="left:368px;top:679.6px;width:1px;height:17px;background:#a0a0a0;"></div>
<svg style="left:411px;top:682px;" width="12" height="12" viewBox="0 0 12 12" fill="none"><path d="M5.5 0 V11 M0 5.5 H11" stroke="#a4a4a4" stroke-width="1"/></svg>
<svg style="left:26.6px;top:682px;" width="8" height="11" viewBox="0 0 8 11" fill="none"><path d="M6.8 0.6 L1 5.4 L6.8 10.2" stroke="#9c9c9c" stroke-width="1.2"/></svg>
<svg style="left:59.6px;top:682px;" width="8" height="11" viewBox="0 0 8 11" fill="none"><path d="M1 0.6 L6.8 5.4 L1 10.2" stroke="#9c9c9c" stroke-width="1.2"/></svg>
<div style="left:0px;top:704px;width:1365px;height:22px;background:#383838;"></div>
<div style="left:0px;top:726px;width:1365px;height:5px;background:#101010;"></div>
<div style="left:47.4px;top:726px;width:287px;height:5px;background:#2f2f2f;border-top:1px solid #4a4a4a;border-right:1px solid #4a4a4a;"></div>
<div style="left:262.6px;top:726px;width:70px;height:1.4px;background:#5a5a5a;"></div>
<div style="left:387px;top:726px;width:48px;height:5px;background:#2a2a2a;"></div>
<svg style="left:65px;top:709px;" width="15" height="13" viewBox="0 0 15 13" fill="none"><rect x="0.6" y="0.6" width="13.4" height="11.4" stroke="#e4e4e4" stroke-width="1.05"/><path d="M0.6 3.2 H14 M2.6 5.6 H5.6 M2.6 7.8 H5.6 M2.6 10 H5.6" stroke="#e4e4e4" stroke-width="1"/><circle cx="10.4" cy="8.6" r="3.6" fill="#383838" stroke="#e4e4e4" stroke-width="1.1"/><circle cx="10.4" cy="8.6" r="1.3" fill="#e4e4e4"/></svg>
<svg style="left:96.6px;top:707.6px;" width="15" height="15" viewBox="0 0 15 15" fill="none"><circle cx="5.6" cy="2.2" r="1.5" stroke="#e4e4e4" stroke-width="1"/><path d="M0.8 4.4 C3.6 6 7.6 6 10.4 4.4 M3.8 5.6 V9.4 L2.2 13.6 M7.4 5.6 V8.4" stroke="#e4e4e4" stroke-width="1.05"/><path d="M6.6 10.8 L8.8 13.2 L13.6 7.8" stroke="#e4e4e4" stroke-width="1.1"/></svg>
<div style="left:1065px;top:704px;width:40px;height:22px;background:#474747;"></div>
<svg style="left:1078px;top:708px;" width="13" height="13" viewBox="0 0 13 13" fill="none"><rect x="0.5" y="0.5" width="12" height="12" stroke="#fff" stroke-width="1"/><path d="M0.5 4.5 H12.5 M0.5 8.5 H12.5 M4.5 0.5 V12.5 M8.5 0.5 V12.5" stroke="#fff" stroke-width="1"/></svg>
<svg style="left:1118px;top:708px;" width="14" height="13" viewBox="0 0 14 13" fill="none"><rect x="0.5" y="0.5" width="13" height="12" stroke="#fff" stroke-width="1"/><rect x="3.5" y="2.5" width="7" height="8" stroke="#fff" stroke-width="1"/><path d="M5 4.5 H9 M5 6.5 H9 M5 8.5 H9" stroke="#fff" stroke-width="0.9"/></svg>
<svg style="left:1158px;top:708px;" width="14" height="13" viewBox="0 0 14 13" fill="none"><rect x="0.5" y="0.5" width="13" height="12" stroke="#fff" stroke-width="1"/><path d="M0.5 7.5 H8.5 V0.5 M4.5 0.5 V7.5" stroke="#fff" stroke-width="1"/></svg>
<div style="left:1191px;top:713.8px;width:8px;height:1.2px;background:#e0e0e0;"></div>
<div style="left:1204px;top:715px;width:100px;height:1px;background:#c8c8c8;"></div>
<div style="left:1252.2px;top:709.8px;width:4.8px;height:11.4px;background:#c8c8c8;border-radius:1px;"></div>
<svg style="left:1309px;top:711px;" width="8" height="8" viewBox="0 0 8 8" fill="none"><path d="M3.8 0 V7.6 M0 3.8 H7.6" stroke="#e0e0e0" stroke-width="1.1"/></svg>
</div>
<div id="tx">
<span class="t" style="left:46.33px;top:16.00px;font-size:12.6px;color:#fff;letter-spacing:-0.167px;">Salvamento Automático</span>
<span class="t" style="left:379.67px;top:16.50px;font-size:12.6px;color:#fff;letter-spacing:-0.381px;">tratamento_template_v1</span>
<span class="t" style="left:546.83px;top:16.50px;font-size:12.6px;color:#fff;letter-spacing:-0.583px;">Salvo</span>
<span class="t" style="left:660.00px;top:16.51px;font-size:12.8px;color:#cfcfcf;letter-spacing:0.042px;">Pesquisar</span>
<span class="t" style="left:1110.70px;top:16.50px;font-size:12.6px;color:#fff;letter-spacing:-0.259px;">Filipi Ribeiro</span>
<span class="t" style="left:7.00px;top:55.20px;font-size:13.1px;color:#fff;letter-spacing:0.117px;">Arquivo</span>
<span class="t" style="left:65.00px;top:55.20px;font-size:13.1px;color:#fff;font-weight:700;letter-spacing:-0.177px;">Página Inicial</span>
<span class="t" style="left:164.17px;top:55.20px;font-size:13.1px;color:#fff;letter-spacing:0.083px;">Inserir</span>
<span class="t" style="left:222.70px;top:55.20px;font-size:13.1px;color:#fff;letter-spacing:-0.067px;">Layout da Página</span>
<span class="t" style="left:345.00px;top:55.20px;font-size:13.1px;color:#fff;">Fórmulas</span>
<span class="t" style="left:419.50px;top:55.20px;font-size:13.1px;color:#fff;letter-spacing:0.292px;">Dados</span>
<span class="t" style="left:476.50px;top:55.20px;font-size:13.1px;color:#fff;letter-spacing:-0.194px;">Revisão</span>
<span class="t" style="left:542.00px;top:55.20px;font-size:13.1px;color:#fff;letter-spacing:-0.133px;">Exibir</span>
<span class="t" style="left:597.00px;top:55.20px;font-size:13.1px;color:#fff;letter-spacing:-0.024px;">Automate</span>
<span class="t" style="left:674.50px;top:55.20px;font-size:13.1px;color:#fff;letter-spacing:0.014px;">Desenvolvedor</span>
<span class="t" style="left:784.50px;top:55.20px;font-size:13.1px;color:#fff;letter-spacing:-0.167px;">Ajuda</span>
<span class="t" style="left:839.00px;top:55.20px;font-size:13.1px;color:#fff;letter-spacing:-0.100px;">Power Pivot</span>
<span class="t" style="left:1106.03px;top:55.20px;font-size:13.1px;color:#fff;letter-spacing:0.080px;">Comentários</span>
<span class="t" style="left:1222.33px;top:55.20px;font-size:13.1px;color:#000;letter-spacing:0.122px;">Compartilhamento</span>
<span class="t" style="left:41.73px;top:120.81px;font-size:12.3px;color:#fff;letter-spacing:-0.267px;">Colar</span>
<span class="t" style="left:14.20px;top:159.90px;font-size:11.6px;color:#fff;letter-spacing:-0.260px;">Área de Transferência</span>
<span class="t" style="left:154.73px;top:93.71px;font-size:12.2px;color:#fff;letter-spacing:0.100px;">Calibri</span>
<span class="t" style="left:279.70px;top:93.71px;font-size:12.2px;color:#fff;letter-spacing:-0.200px;">10</span>
<span class="t" style="left:327.00px;top:91.01px;font-size:16.5px;color:#9a9a9a;">A</span>
<span class="t" style="left:354.20px;top:94.02px;font-size:13.6px;color:#9a9a9a;">A</span>
<span class="t" style="left:157.90px;top:123.70px;font-size:14.2px;color:#a8a8a8;font-weight:700;">N</span>
<span class="t" style="left:187.20px;top:123.71px;font-size:14.6px;color:#a8a8a8;font-family:'Liberation Serif',serif;font-style:italic;">I</span>
<span class="t" style="left:211.93px;top:124.70px;font-size:13.8px;color:#a8a8a8;">S</span>
<span class="t" style="left:340.00px;top:121.91px;font-size:15.8px;color:#9a9a9a;">A</span>
<span class="t" style="left:238.60px;top:159.90px;font-size:11.6px;color:#fff;letter-spacing:0.275px;">Fonte</span>
<span class="t" style="left:437.00px;top:159.90px;font-size:11.6px;color:#fff;letter-spacing:0.130px;">Alinhamento</span>
<span class="t" style="left:629.83px;top:109.21px;font-size:19.4px;color:#bdbdbd;">%</span>
<span class="t" style="left:655.47px;top:113.02px;font-size:10px;color:#c2c2c2;letter-spacing:-0.100px;">000</span>
<span class="t" style="left:601.50px;top:159.90px;font-size:11.6px;color:#fff;letter-spacing:0.027px;">Número</span>
<span class="t" style="left:715.30px;top:87.01px;font-size:12.2px;color:#8c8c8c;letter-spacing:-0.049px;">Formatação Condicional</span>
<span class="t" style="left:715.30px;top:113.01px;font-size:12.2px;color:#8c8c8c;letter-spacing:-0.167px;">Formatar como Tabela</span>
<span class="t" style="left:715.30px;top:138.91px;font-size:12.2px;color:#8c8c8c;letter-spacing:-0.337px;">Estilos de Célula</span>
<span class="t" style="left:761.50px;top:159.90px;font-size:11.6px;color:#fff;letter-spacing:-0.094px;">Estilos</span>
<span class="t" style="left:905.60px;top:87.01px;font-size:12.2px;color:#8c8c8c;letter-spacing:-0.261px;">Inserir</span>
<span class="t" style="left:905.60px;top:113.01px;font-size:12.2px;color:#8c8c8c;letter-spacing:-0.156px;">Excluir</span>
<span class="t" style="left:905.60px;top:138.91px;font-size:12.2px;color:#fff;letter-spacing:-0.162px;">Formatar</span>
<span class="t" style="left:908.83px;top:159.90px;font-size:11.6px;color:#fff;letter-spacing:-0.278px;">Células</span>
<span class="t" style="left:1013.80px;top:159.90px;font-size:11.6px;color:#fff;letter-spacing:-0.300px;">Edição</span>
<span class="t" style="left:1089.63px;top:119.80px;font-size:12.2px;color:#7c7c7c;letter-spacing:-0.004px;">Confidencialidade</span>
<span class="t" style="left:1090.73px;top:159.90px;font-size:11.6px;color:#fff;letter-spacing:0.150px;">Confidencialidade</span>
<span class="t" style="left:1206.73px;top:119.80px;font-size:12.2px;color:#7c7c7c;letter-spacing:-0.140px;">Suplementos</span>
<span class="t" style="left:1207.63px;top:159.90px;font-size:11.6px;color:#fff;letter-spacing:-0.047px;">Suplementos</span>
<span class="t" style="left:14.20px;top:191.01px;font-size:13.4px;color:#fff;letter-spacing:-0.200px;">A5</span>
<span class="t" style="left:183.67px;top:189.61px;font-size:16px;color:#a8a8a8;font-family:'Liberation Serif',serif;font-style:italic;">f</span>
<span class="t" style="left:190.60px;top:191.62px;font-size:13.2px;color:#a8a8a8;font-family:'Liberation Serif',serif;font-style:italic;">x</span>
<span class="t" style="left:218.20px;top:192.00px;font-size:12.6px;color:#fff;letter-spacing:0.417px;">Descrição</span>
<span class="t" style="left:162.80px;top:221.01px;font-size:12.8px;color:#fff;">A</span>
<span class="t" style="left:448.40px;top:221.01px;font-size:12.8px;color:#fff;">B</span>
<span class="t" style="left:872.93px;top:221.01px;font-size:12.8px;color:#fff;">C</span>
<span class="t" style="left:1269.40px;top:221.01px;font-size:12.8px;color:#fff;">D</span>
<span class="t" style="left:6.70px;top:241.01px;font-size:13.2px;color:#fff;">1</span>
<span class="t" style="left:7.03px;top:261.01px;font-size:13.2px;color:#fff;">2</span>
<span class="t" style="left:7.03px;top:295.01px;font-size:13.2px;color:#fff;">3</span>
<span class="t" style="left:7.37px;top:315.01px;font-size:13.2px;color:#fff;">4</span>
<span class="t" style="left:7.03px;top:397.01px;font-size:13.2px;color:#fff;">5</span>
<span class="t" style="left:7.03px;top:417.01px;font-size:13.2px;color:#fff;">6</span>
<span class="t" style="left:7.03px;top:437.01px;font-size:13.2px;color:#fff;">7</span>
<span class="t" style="left:7.03px;top:457.01px;font-size:13.2px;color:#fff;">8</span>
<span class="t" style="left:7.03px;top:477.01px;font-size:13.2px;color:#fff;">9</span>
<span class="t" style="left:3.40px;top:497.01px;font-size:13.2px;color:#fff;letter-spacing:0.4px;">10</span>
<span class="t" style="left:3.40px;top:517.01px;font-size:13.2px;color:#fff;letter-spacing:0.4px;">11</span>
<span class="t" style="left:3.40px;top:537.01px;font-size:13.2px;color:#fff;letter-spacing:0.4px;">12</span>
<span class="t" style="left:3.40px;top:557.01px;font-size:13.2px;color:#fff;letter-spacing:0.4px;">13</span>
<span class="t" style="left:3.40px;top:577.01px;font-size:13.2px;color:#fff;letter-spacing:0.4px;">14</span>
<span class="t" style="left:3.40px;top:597.01px;font-size:13.2px;color:#fff;letter-spacing:0.4px;">15</span>
<span class="t" style="left:3.40px;top:617.01px;font-size:13.2px;color:#fff;letter-spacing:0.4px;">16</span>
<span class="t" style="left:3.40px;top:637.01px;font-size:13.2px;color:#fff;letter-spacing:0.4px;">17</span>
<span class="t" style="left:3.40px;top:657.01px;font-size:13.2px;color:#fff;letter-spacing:0.4px;">18</span>
<span class="t" style="left:495.80px;top:240.61px;font-size:12.9px;color:#000000;font-weight:700;letter-spacing:0.007px;">Registro do tramento de dados</span>
<span class="t" style="left:149.40px;top:261.61px;font-size:12.9px;color:#000000;font-weight:700;letter-spacing:0.147px;">Título</span>
<span class="t" style="left:419.30px;top:261.61px;font-size:12.9px;color:#000000;font-weight:700;letter-spacing:-0.019px;">Instruções</span>
<span class="t" style="left:846.00px;top:261.61px;font-size:12.9px;color:#000000;font-weight:700;letter-spacing:-0.204px;">Descrição</span>
<span class="t" style="left:115.93px;top:288.80px;font-size:11.2px;color:#000000;font-weight:700;letter-spacing:0.071px;">Nome do Processo</span>
<span class="t" style="left:154.87px;top:315.80px;font-size:11.2px;color:#000000;font-weight:700;letter-spacing:-0.767px;">Sigla</span>
<span class="t" style="left:140.53px;top:367.00px;font-size:11.2px;color:#000000;font-weight:700;letter-spacing:-0.217px;">Descrição</span>
<span class="t" style="left:311.50px;top:280.01px;font-size:12.2px;color:#000000;letter-spacing:-0.105px;">Escrever o nome do processo.</span>
<span class="t" style="left:311.83px;top:297.81px;font-size:11.8px;color:#000000;font-weight:700;letter-spacing:-0.106px;">(Obrigatório) - máximo 255 caracteres</span>
<span class="t" style="left:311.83px;top:315.01px;font-size:12.2px;color:#000000;letter-spacing:-0.009px;">Sigla do processo. -</span>
<span class="t" style="left:422.13px;top:316.01px;font-size:11.8px;color:#000000;font-weight:700;letter-spacing:-0.186px;">máximo 10 caracteres</span>
<span class="t" style="left:311.50px;top:341.01px;font-size:12.2px;color:#000000;letter-spacing:0.015px;">Descrição do processo. O que é feito, quais os</span>
<span class="t" style="left:312.17px;top:357.80px;font-size:12.2px;color:#000000;">dados trafegados, por quais áreas e pessoas e a</span>
<span class="t" style="left:312.17px;top:374.80px;font-size:12.2px;color:#000000;letter-spacing:-0.027px;">duração em que o dado permanece armazenado.</span>
<span class="t" style="left:311.83px;top:392.60px;font-size:11.8px;color:#000000;font-weight:700;letter-spacing:-0.059px;">Máximo 4000 caracteres restantes</span>
<span class="t" style="left:123.00px;top:679.01px;font-size:13.5px;color:#1a1a1a;font-weight:700;letter-spacing:0.157px;">Informações gerais</span>
<span class="t" style="left:276.27px;top:682.01px;font-size:13.2px;color:#fff;letter-spacing:0.403px;">Tratamentos</span>
<span class="t" style="left:9.50px;top:710.01px;font-size:11.6px;color:#fff;letter-spacing:0.227px;">Pronto</span>
<span class="t" style="left:114.00px;top:710.01px;font-size:11.6px;color:#fff;letter-spacing:0.037px;">Acessibilidade: tudo certo</span>
<span class="t" style="left:1330.00px;top:710.40px;font-size:11.4px;color:#fff;letter-spacing:-0.556px;">100%</span>
</div>
</body></html>
